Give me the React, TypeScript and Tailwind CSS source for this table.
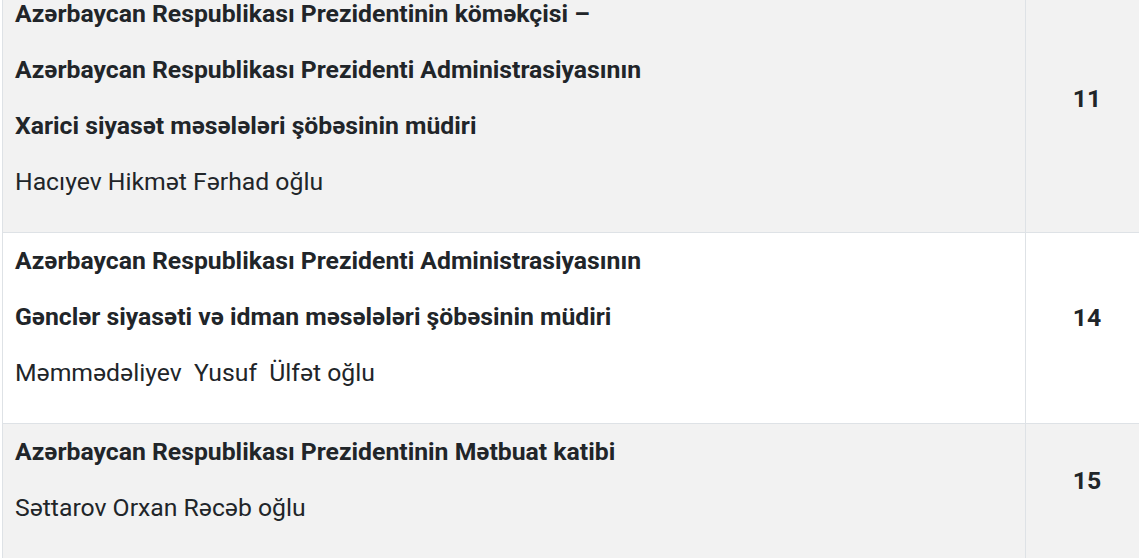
import React from "react";

type Row = { titles: string[]; name: string; num: string; bg: string };

const rows: Row[] = [
  {
    titles: [
      "Azərbaycan Respublikası Prezidentinin köməkçisi –",
      "Azərbaycan Respublikası Prezidenti Administrasiyasının",
      "Xarici siyasət məsələləri şöbəsinin müdiri",
    ],
    name: "Hacıyev Hikmət Fərhad oğlu",
    num: "11",
    bg: "bg-[#f2f2f2]",
  },
  {
    titles: [
      "Azərbaycan Respublikası Prezidenti Administrasiyasının",
      "Gənclər siyasəti və idman məsələləri şöbəsinin müdiri",
    ],
    name: "Məmmədəliyev  Yusuf  Ülfət oğlu",
    num: "14",
    bg: "bg-white",
  },
  {
    titles: ["Azərbaycan Respublikası Prezidentinin Mətbuat katibi"],
    name: "Səttarov Orxan Rəcəb oğlu",
    num: "15",
    bg: "bg-[#f2f2f2]",
  },
];

export default function App() {
  return (
    <div className="w-[1139px] h-[558px] overflow-hidden bg-white font-['Roboto',sans-serif] text-[#212529]">
      <div className="ml-[2px] w-[1146px] -mt-[15px] border-l border-[#dee2e6]">
        {rows.map((r, i) => (
          <div key={i} className={`flex ${r.bg} border-t border-[#dee2e6]`}>
            <div className="w-[1023px] pl-[12px] pt-[14px] pb-[8px] border-r border-[#dee2e6]">
              {r.titles.map((t, j) => (
                <p key={j} className="text-[24.75px] leading-[28px] font-bold mb-[28px]">
                  {t}
                </p>
              ))}
              <p className="text-[24.75px] leading-[28px] mb-[28px] whitespace-pre">{r.name}</p>
            </div>
            <div className="flex-1 flex items-center justify-center pb-[20px]">
              <span className="text-[24.75px] leading-[28px] font-bold">{r.num}</span>
            </div>
          </div>
        ))}
      </div>
    </div>
  );
}
